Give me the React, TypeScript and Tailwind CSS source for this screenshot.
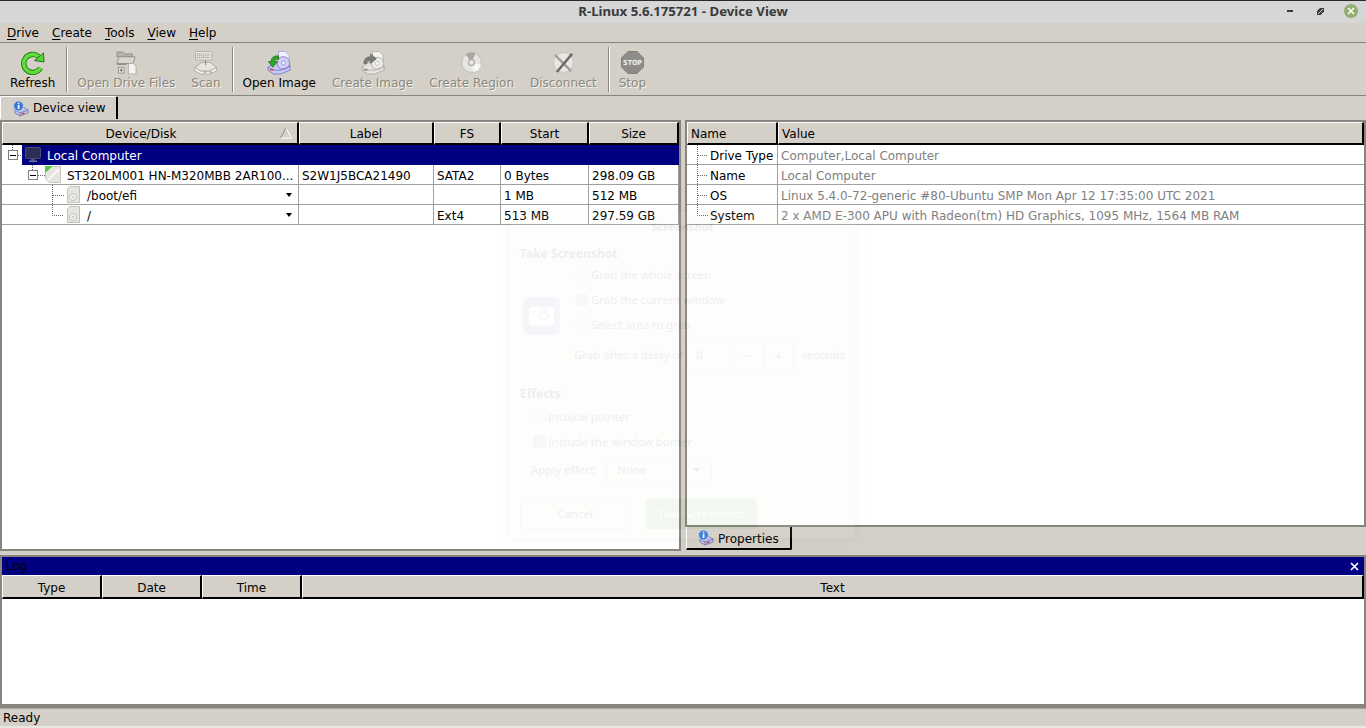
import React from "react";

const dot = { stroke: "#666", strokeWidth: 1, strokeDasharray: "1 1", fill: "none" };

function Expander({ x, y }: { x: number; y: number }) {
  return (
    <g>
      <rect x={x + 0.5} y={y + 0.5} width={9} height={9} fill="#fff" stroke="#808080" />
      <path d={`M${x + 2} ${y + 5}H${x + 8}`} stroke="#000" strokeWidth={1} shapeRendering="crispEdges" />
    </g>
  );
}

function DiskInfoIcon() {
  return (
    <svg width="17" height="17" viewBox="0 0 17 17" className="shrink-0">
      <path d="M3 10 L11 7 L16 10 L16 13 L8 16 L3 13Z" fill="#c4c8e8" stroke="#6a70a8" strokeWidth="0.8" />
      <path d="M3 10 L8 13 L16 10 M8 13V16" fill="none" stroke="#6a70a8" strokeWidth="0.8" />
      <rect x="9.5" y="13" width="3" height="1" fill="#d02020" transform="rotate(-18 11 13.5)" />
      <circle cx="6.5" cy="6" r="5" fill="#3c78d8" stroke="#b8cdf0" strokeWidth="1" />
      <rect x="5.8" y="5" width="1.6" height="4" fill="#fff" />
      <rect x="5.8" y="2.8" width="1.6" height="1.4" fill="#fff" />
    </svg>
  );
}

function RefreshIcon() {
  return (
    <svg width="24" height="24" viewBox="0 0 24 24">
      <path d="M19.5 17 A9 9 0 1 1 17.5 5.5" fill="none" stroke="#1c7a14" strokeWidth="5.4" />
      <path d="M19.5 17 A9 9 0 1 1 17.5 5.5" fill="none" stroke="#5fdc3c" strokeWidth="3.6" />
      <path d="M13.5 9.5 L23 11 L22.5 2 Z" fill="#58d438" stroke="#1c7a14" strokeWidth="1" strokeLinejoin="round" />
    </svg>
  );
}

function OpenFilesIcon() {
  return (
    <svg width="21" height="24" viewBox="0 0 22 25">
      <path d="M1 1H7L9 3H17V6H1Z" fill="#b4b2ac" stroke="#85837e" strokeWidth="0.8" />
      <path d="M1 13 L3 6 H20 L18 13Z" fill="#d9d7d1" stroke="#85837e" strokeWidth="0.8" />
      <rect x="1" y="13" width="10" height="1.5" fill="#8d8b86" />
      <path d="M13 13 H18 L21 16 V24 H13Z" fill="#f4f3f0" stroke="#a3a19c" strokeWidth="0.8" />
      <rect x="2.5" y="17" width="6" height="6" fill="#ecebe7" stroke="#85837e" strokeWidth="0.8" />
      <path d="M3.8 20H7.2M5.5 18.3V21.7" stroke="#55534f" strokeWidth="0.9" />
    </svg>
  );
}

function ScanIcon() {
  return (
    <svg width="24" height="24" viewBox="0 0 25 25">
      <rect x="1.5" y="0.5" width="17" height="9" rx="1" fill="#ecebe7" stroke="#a3a19c" strokeWidth="0.8" />
      <path d="M3 3H17M3 5H17M3 7H17" stroke="#8d8b86" strokeWidth="1" strokeDasharray="1.3 0.7" />
      <path d="M1 17 L8 12 H17 L23.5 17 L16 21 H7Z" fill="#e6e5e0" stroke="#a3a19c" strokeWidth="0.8" />
      <path d="M1 17 V21 L7 24 H17 L23.5 20.5 V17 L16 21 H7Z" fill="#f2f1ee" stroke="#a3a19c" strokeWidth="0.8" />
      <path d="M12 9.5V15" stroke="#8d8b86" strokeWidth="1" />
      <path d="M10 22H13M16 22H19" stroke="#8d8b86" strokeWidth="1" />
    </svg>
  );
}

function OpenImageIcon() {
  return (
    <svg width="24" height="24" viewBox="0 0 25 25">
      <path d="M12 0.5H19L23 4.5V11H12Z" fill="#f1f1fb" stroke="#9a9adf" strokeWidth="0.8" />
      <path d="M1 17 L8 12 H18 L24 15 V20 L14 24 H7 L1 20Z" fill="#c9c9f2" stroke="#6d6dc4" strokeWidth="0.8" />
      <circle cx="17" cy="12.5" r="6.6" fill="#cfcff6" stroke="#6d6dc4" strokeWidth="0.8" />
      <circle cx="17" cy="12.5" r="2" fill="#f5f5ff" stroke="#6d6dc4" strokeWidth="0.6" />
      <path d="M1 17 L7 20 H14 L24 16" fill="none" stroke="#6d6dc4" strokeWidth="0.8" />
      <rect x="3" y="19" width="4" height="1.3" fill="#d83030" />
      <path d="M12 5 C6 5 4 8 4.5 11 L1.5 11 L6 17 L11 11 L8 11 C8 9 9 8.5 12 8.5Z" fill="#2fa52a" stroke="#156312" strokeWidth="0.7" />
    </svg>
  );
}

function CreateImageIcon() {
  return (
    <svg width="24" height="24" viewBox="0 0 25 25">
      <path d="M12 0.5H19L23 4.5V11H12Z" fill="#f4f3f0" stroke="#aaa8a3" strokeWidth="0.8" />
      <path d="M1 17 L8 12 H18 L24 15 V20 L14 24 H7 L1 20Z" fill="#e6e5e0" stroke="#a3a19c" strokeWidth="0.8" />
      <circle cx="17" cy="13" r="6.4" fill="#ecebe7" stroke="#a3a19c" strokeWidth="0.8" />
      <circle cx="17" cy="13" r="2" fill="#fafafa" stroke="#a3a19c" strokeWidth="0.6" />
      <path d="M1 17 L7 20 H14 L24 16" fill="none" stroke="#a3a19c" strokeWidth="0.8" />
      <rect x="3" y="19" width="4" height="1.3" fill="#777" />
      <path d="M3 13 C3 8 6 6 10 6 V3 L16 8 L10 13 V10 C7.5 10 6 11 6 13Z" fill="#7d7b77" stroke="#5d5b57" strokeWidth="0.6" />
    </svg>
  );
}

function DiscIcon() {
  return (
    <svg width="21" height="21" viewBox="0 0 22 22">
      <circle cx="11" cy="11" r="10.3" fill="#e6e5e1" stroke="#b6b4af" strokeWidth="0.8" />
      <path d="M11 11 L5 2.5 A10.3 10.3 0 0 1 15 1.5Z" fill="#a8a6a1" />
      <path d="M11 11 L21 13 A10.3 10.3 0 0 1 13 21Z" fill="#f7f7f5" />
      <circle cx="11" cy="11" r="3.5" fill="#d4d0c8" stroke="#a3a19c" strokeWidth="0.8" />
      <circle cx="11" cy="11" r="1.4" fill="#fafafa" />
    </svg>
  );
}

function DisconnectIcon() {
  return (
    <svg width="21" height="21" viewBox="0 0 22 22">
      <circle cx="11" cy="11" r="10.3" fill="#e9e8e4" stroke="#c0beb9" strokeWidth="0.8" />
      <path d="M2 3 L19 20" stroke="#a09e99" strokeWidth="2.4" />
      <path d="M20 2 L4 21" stroke="#6d6b67" strokeWidth="2.6" />
    </svg>
  );
}

function StopIcon() {
  return (
    <svg width="23" height="23" viewBox="0 0 23 23">
      <path d="M7 0.5H16L22.5 7V16L16 22.5H7L0.5 16V7Z" fill="#8e8d8a" stroke="#74726f" strokeWidth="0.8" />
      <text x="11.5" y="14" textAnchor="middle" fontSize="7" fontWeight="700" fill="#f0f0ee" fontFamily="'Liberation Sans Narrow','DejaVu Sans Condensed','Liberation Sans',sans-serif">STOP</text>
    </svg>
  );
}

function ToolButton({ label, icon, disabled }: { label: string; icon: React.ReactNode; disabled?: boolean }) {
  return (
    <div className="flex flex-col items-center h-full pt-[7px] px-2 whitespace-nowrap">
      <div className="h-[25px] flex items-center justify-center">{icon}</div>
      <span className={disabled ? "text-[#8a8880] mt-px leading-[15px] [text-shadow:1px_1px_0_#f4f2ec]" : "text-black mt-px leading-[15px]"}>{label}</span>
    </div>
  );
}

function Sep() {
  return <div className="w-px h-[45px] bg-[#888480] border-r border-white box-content ml-[3px] mr-px self-center" />;
}

function HeadCell({ w, children, align = "center" }: { w: string; children: React.ReactNode; align?: "center" | "left" }) {
  return (
    <div
      className={`${w} relative h-full shrink-0 pt-[2px] bg-[#d4d0c8] border-t border-l border-t-white border-l-white border-r-2 border-b-2 border-r-black border-b-black flex items-center ${align === "center" ? "justify-center" : "justify-start pl-[3px]"}`}
    >
      {children}
    </div>
  );
}

function Cell({ w, children, flush }: { w: string; children?: React.ReactNode; flush?: boolean }) {
  return (
    <div className={`${w} ${flush ? "" : "pl-[3px] pt-[2px]"} h-full shrink-0 border-r border-[#a0a0a0] flex items-center whitespace-nowrap overflow-hidden`}>{children}</div>
  );
}

function PartIcon() {
  return (
    <svg width="13" height="17" viewBox="0 0 13 17" className="shrink-0">
      <path d="M0.5 3 L3 0.5 H12.5 V16.5 H0.5Z" fill="#e6e5e1" stroke="#c2c0bb" />
      <circle cx="6" cy="11" r="3.6" fill="#efefec" stroke="#c6c4bf" />
      <circle cx="6" cy="11" r="1.2" fill="#d4d2cd" />
    </svg>
  );
}

function DiskIcon() {
  return (
    <svg width="16" height="17" viewBox="0 0 16 17" className="shrink-0">
      <path d="M0.5 0.5H15.5V16.5H4.5L0.5 12.5Z" fill="#e6e5e1" stroke="#c8c6c1" />
      <path d="M0 0H8L0 7Z" fill="#4fcb3c" />
      <path d="M3 14 L14 3" stroke="#f8f8f6" strokeWidth="2" />
    </svg>
  );
}

function MonitorIcon() {
  return (
    <svg width="16" height="16" viewBox="0 0 16 16" className="shrink-0">
      <rect x="0.5" y="0.5" width="15" height="11" rx="1" fill="#2c2c54" stroke="#4a4a6e" />
      <rect x="6" y="12" width="4" height="1.5" fill="#4a4a6e" />
      <rect x="4" y="13.5" width="8" height="1.5" fill="#7878a0" />
    </svg>
  );
}

function DropMark() {
  return <span className="ml-auto mr-[6px] mt-px w-0 h-0 border-l-[3px] border-r-[3px] border-t-[4px] border-l-transparent border-r-transparent border-t-black" />;
}

function Guide({ w, children }: { w: number; children: React.ReactNode }) {
  return (
    <svg width={w} height="20" viewBox={`0 0 ${w} 20`} className="shrink-0">
      {children}
    </svg>
  );
}

function DeviceTable() {
  const rowClass = "flex h-5 border-b border-[#a0a0a0]";
  return (
    <div className="w-[681px] shrink-0 bg-white border-2 border-[#888480] flex flex-col overflow-hidden">
      <div className="flex h-[23px] shrink-0">
        <HeadCell w="w-[297px]">
          <span className="pr-[18px]">Device/Disk</span>
          <svg width="12" height="12" viewBox="0 0 12 12" className="absolute right-[5px] top-[4px]">
            <path d="M6 1 L11.5 11 H0.5Z" fill="none" stroke="#fff" />
            <path d="M0.5 11 L6 1" fill="none" stroke="#808080" />
          </svg>
        </HeadCell>
        <HeadCell w="w-[135px]">Label</HeadCell>
        <HeadCell w="w-[67px]">FS</HeadCell>
        <HeadCell w="w-[88px]">Start</HeadCell>
        <HeadCell w="w-[90px]">Size</HeadCell>
      </div>
      <div className="flex h-5 items-center">
        <Guide w={20}>
          <path d="M10.5 0V5M16 10.5H20" {...dot} />
          <Expander x={6} y={5} />
        </Guide>
        <div className="flex-1 h-full bg-[#000080] text-white flex items-center pl-[3px] gap-[6px]">
          <MonitorIcon />
          <span className="pt-[2px]">Local Computer</span>
        </div>
      </div>
      <div className={rowClass}>
        <Cell w="w-[297px]" flush>
          <Guide w={43}>
            <path d="M30.5 0V5M36 10.5H43" {...dot} />
            <Expander x={26} y={5} />
          </Guide>
          <DiskIcon />
          <span className="ml-[6px] pt-[2px]">ST320LM001 HN-M320MBB 2AR100...</span>
        </Cell>
        <Cell w="w-[135px]">S2W1J5BCA21490</Cell>
        <Cell w="w-[67px]">SATA2</Cell>
        <Cell w="w-[88px]">0 Bytes</Cell>
        <Cell w="w-[90px]">298.09 GB</Cell>
      </div>
      <div className={rowClass}>
        <Cell w="w-[297px]" flush>
          <Guide w={65}>
            <path d="M50.5 0V20M51 10.5H62" {...dot} />
          </Guide>
          <PartIcon />
          <span className="ml-[7px] pt-[2px]">/boot/efi</span>
          <DropMark />
        </Cell>
        <Cell w="w-[135px]" />
        <Cell w="w-[67px]" />
        <Cell w="w-[88px]">1 MB</Cell>
        <Cell w="w-[90px]">512 MB</Cell>
      </div>
      <div className={rowClass}>
        <Cell w="w-[297px]" flush>
          <Guide w={65}>
            <path d="M50.5 0V10.5H62" {...dot} />
          </Guide>
          <PartIcon />
          <span className="ml-[7px] pt-[2px]">/</span>
          <DropMark />
        </Cell>
        <Cell w="w-[135px]" />
        <Cell w="w-[67px]">Ext4</Cell>
        <Cell w="w-[88px]">513 MB</Cell>
        <Cell w="w-[90px]">297.59 GB</Cell>
      </div>
    </div>
  );
}

const props: [string, string, string][] = [
  ["Drive Type", "Computer,Local Computer", "M10.5 0V20M11 10.5H21"],
  ["Name", "Local Computer", "M10.5 0V20M11 10.5H21"],
  ["OS", "Linux 5.4.0-72-generic #80-Ubuntu SMP Mon Apr 12 17:35:00 UTC 2021", "M10.5 0V20M11 10.5H21"],
  ["System", "2 x AMD E-300 APU with Radeon(tm) HD Graphics, 1095 MHz, 1564 MB RAM", "M10.5 0V10.5H21"],
];

function PropsPane() {
  return (
    <div className="w-[681px] shrink-0 flex flex-col">
      <div className="h-[407px] shrink-0 bg-white border-2 border-[#888480] flex flex-col overflow-hidden">
        <div className="flex h-[23px] shrink-0">
          <HeadCell w="w-[91px]" align="left">Name</HeadCell>
          <HeadCell w="w-[586px]" align="left">Value</HeadCell>
        </div>
        {props.map(([n, v, d]) => (
          <div key={n} className="flex h-5 border-b border-[#a0a0a0]">
            <div className="w-[91px] shrink-0 h-full border-r border-[#a0a0a0] flex items-center whitespace-nowrap">
              <Guide w={23}>
                <path d={d} {...dot} />
              </Guide>
              <span className="pt-[2px]">{n}</span>
            </div>
            <div className="flex-1 flex items-center pl-[3px] pt-[2px] text-[#808080] whitespace-nowrap">{v}</div>
          </div>
        ))}
      </div>
      <div className="h-[23px] shrink-0 flex">
        <div className="w-[106px] h-[23px] ml-px border-l border-white border-r-2 border-b-2 border-r-black border-b-black rounded-br-[2px] flex items-center pl-[10px] gap-[4px]">
          <DiskInfoIcon />
          <span className="pt-[2px]">Properties</span>
        </div>
      </div>
    </div>
  );
}

function GhostDialog() {
  return (
    <div className="absolute left-[510px] top-[212px] w-[345px] h-[326px] bg-[#e8e8d8] opacity-[0.07] text-[#111] text-[11.4px] font-['Noto_Sans','DejaVu_Sans',sans-serif] shadow-[0_2px_8px_rgba(0,0,0,0.5)] pointer-events-none flex flex-col px-[10px]">
      <div className="text-center h-[30px] leading-[30px] font-bold text-[11.2px]">Screenshot</div>
      <div className="font-bold text-[12px] mt-[3px] h-[18px]">Take Screenshot</div>
      <div className="flex mt-[-1px]">
        <div className="w-[37px] h-[38px] mt-[35px] ml-[3px] bg-[#7a92c8] rounded-[6px] flex items-center justify-center">
          <svg width="25" height="18" viewBox="0 0 25 18">
            <rect width="25" height="18" rx="2" fill="#fff" />
            <circle cx="15" cy="9" r="4" fill="none" stroke="#7a92c8" strokeWidth="1.6" />
            <path d="M2 5H7M12 2H19" stroke="#7a92c8" strokeWidth="1.4" />
          </svg>
        </div>
        <div className="ml-[15px] flex flex-col leading-[25px]">
          <div className="flex items-center gap-[2px]"><span className="w-[14px] h-[14px] rounded-full border border-[#aaa] mt-px" />Grab the whole screen</div>
          <div className="flex items-center gap-[2px]"><span className="w-[14px] h-[14px] rounded-full border border-[#999] bg-[#999] mt-px" />Grab the current window</div>
          <div className="flex items-center gap-[2px]"><span className="w-[14px] h-[14px] rounded-full border border-[#aaa] mt-px" />Select area to grab</div>
        </div>
      </div>
      <div className="flex items-center mt-[2px] ml-[54px] h-[32px] whitespace-nowrap">
        <span className="w-[115px]">Grab after a delay of</span>
        <div className="flex w-[107px] h-[31px] border border-[#aaa] rounded-[3px] items-center -ml-px">
          <span className="w-[42px] pl-2">0</span>
          <span className="w-[33px] text-center border-l border-[#aaa] h-full leading-[29px]">−</span>
          <span className="w-[31px] text-center border-l border-[#aaa] h-full leading-[29px]">+</span>
        </div>
        <span className="ml-[7px]">seconds</span>
      </div>
      <div className="font-bold text-[12px] mt-[14px] h-[18px]">Effects</div>
      <div className="ml-[13px] mt-[1px] flex flex-col leading-[25px]">
        <div className="flex items-center gap-[2px]"><span className="w-[13px] h-[13px] border border-[#aaa] rounded-[2px]" />Include pointer</div>
        <div className="flex items-center gap-[2px]"><span className="w-[13px] h-[13px] border border-[#999] bg-[#999] rounded-[2px]" />Include the window border</div>
      </div>
      <div className="ml-[11px] mt-[3px] flex items-center gap-[9px]">
        <span>Apply effect:</span>
        <div className="w-[106px] h-[26px] border border-[#aaa] rounded-[3px] flex items-center pl-[10px] justify-between pr-[10px]">
          None
          <span className="w-0 h-0 border-l-[4px] border-r-[4px] border-t-[4px] border-l-transparent border-r-transparent border-t-[#111]" />
        </div>
      </div>
      <div className="mt-[16px] flex gap-[16px]">
        <div className="w-[110px] h-[30px] border border-[#aaa] rounded-[3px] flex items-center justify-center">Cancel</div>
        <div className="w-[111px] h-[30px] bg-[#5a9c3c] text-white rounded-[3px] flex items-center justify-center">Take Screenshot</div>
      </div>
    </div>
  );
}

const menus = ["Drive", "Create", "Tools", "View", "Help"];

export default function App() {
  return (
    <div className="relative w-[1366px] h-[728px] overflow-hidden bg-[#d4d0c8] text-black text-[12px] font-['DejaVu_Sans',sans-serif] flex flex-col">
      {/* title bar */}
      <div className="h-[23px] shrink-0 bg-[#d6d6d6] border-t border-[#2a2a2a] flex items-center relative">
        <div className="flex-1 text-center font-bold text-[#3a3a3a] text-[13.2px] font-['Noto_Sans',sans-serif]">R-Linux 5.6.175721 - Device View</div>
        <div className="absolute right-[8px] top-[3px] h-[14px] flex items-center">
          <span className="w-[6px] h-[2px] bg-[#3a3a3a] mr-[24px]" />
          <svg width="7" height="7" viewBox="0 0 7 7" className="mr-[20px]">
            <path d="M0 7V3L3 0H7V3.5L3.5 7Z" fill="#3a3a3a" />
            <path d="M1 6 L6 1" stroke="#d6d6d6" strokeWidth="1" />
          </svg>
          <span className="w-[14px] h-[14px] rounded-full bg-[#8fb06e] flex items-center justify-center">
            <svg width="8" height="8" viewBox="0 0 8 8"><path d="M1 1L7 7M7 1L1 7" stroke="#fff" strokeWidth="1.6" /></svg>
          </span>
        </div>
      </div>
      {/* menu bar */}
      <div className="h-[20px] shrink-0 flex items-center pl-[7px] gap-[13px] border-b border-[#888480]">
        {menus.map((m) => (
          <span key={m}>
            <span className="underline underline-offset-2">{m[0]}</span>
            {m.slice(1)}
          </span>
        ))}
      </div>
      {/* toolbar */}
      <div className="h-[53px] shrink-0 flex items-stretch pl-[2px] border-b border-b-[#888480]">
        <ToolButton label="Refresh" icon={<RefreshIcon />} />
        <Sep />
        <ToolButton label="Open Drive Files" icon={<OpenFilesIcon />} disabled />
        <ToolButton label="Scan" icon={<ScanIcon />} disabled />
        <Sep />
        <ToolButton label="Open Image" icon={<OpenImageIcon />} />
        <ToolButton label="Create Image" icon={<CreateImageIcon />} disabled />
        <ToolButton label="Create Region" icon={<DiscIcon />} disabled />
        <ToolButton label="Disconnect" icon={<DisconnectIcon />} disabled />
        <Sep />
        <ToolButton label="Stop" icon={<StopIcon />} disabled />
      </div>
      {/* tabs */}
      <div className="h-6 shrink-0 flex">
        <div className="w-[118px] h-[23px] border-l border-t border-white border-r-2 border-r-black flex items-center pl-[11px] gap-[4px] rounded-t-[2px]">
          <DiskInfoIcon />
          <span>Device view</span>
        </div>
      </div>
      {/* panes */}
      <div className="h-[431px] shrink-0 flex gap-[4px]">
        <DeviceTable />
        <PropsPane />
      </div>
      {/* splitter */}
      <div className="h-[6px] shrink-0 border-b-2 border-[#888480]" />
      {/* log */}
      <div className="flex-1 min-h-0 flex flex-col border-x-2 border-[#888480]">
        <div className="h-[18px] shrink-0 bg-[#000080] flex items-center justify-between pl-[4px] pr-[5px]">
          <span className="text-black text-[12px]">Log</span>
          <svg width="9" height="9" viewBox="0 0 9 9"><path d="M1 1L8 8M8 1L1 8" stroke="#fff" strokeWidth="1.7" /></svg>
        </div>
        <div className="flex h-[24px] shrink-0">
          <HeadCell w="w-[100px]">Type</HeadCell>
          <HeadCell w="w-[100px]">Date</HeadCell>
          <HeadCell w="w-[100px]">Time</HeadCell>
          <HeadCell w="w-[1062px]">Text</HeadCell>
        </div>
        <div className="flex-1 bg-white" />
        <div className="h-[4px] bg-[#888480] -mx-[2px] shrink-0" />
      </div>
      {/* status */}
      <div className="h-5 shrink-0 border-t border-[#a8a49c] pl-[3px] flex items-center leading-none border-b-2 border-b-[#e8e6e0]">Ready</div>
      <GhostDialog />
    </div>
  );
}
